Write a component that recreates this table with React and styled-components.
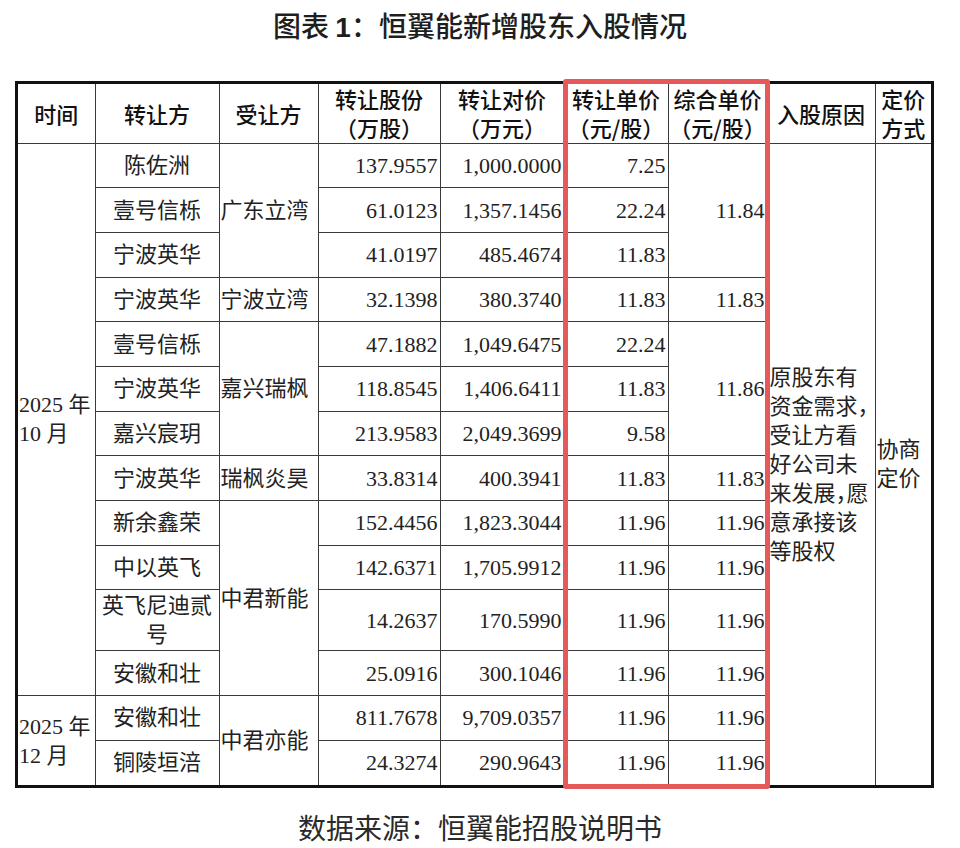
import styled, { createGlobalStyle } from "styled-components";

const GlobalStyle = createGlobalStyle`
    body {
        margin: 0;
        background: #fff;
        font-family: "Liberation Serif", "Noto Sans CJK SC", serif;
        color: #222;
    }
`;

const COLS = [77, 124, 99, 122, 124, 104, 99, 108, 56];

const HEAD = [
    ["时间"],
    ["转让方"],
    ["受让方"],
    ["转让股份", "（万股）"],
    ["转让对价", "（万元）"],
    ["转让单价", "（元/股）"],
    ["综合单价", "（元/股）"],
    ["入股原因"],
    ["定价", "方式"],
];

const ROWS = [
    { time: { lines: ["2025 年", "10 月"], span: 12 }, seller: "陈佐洲", buyer: { text: "广东立湾", span: 3 }, shares: "137.9557", price: "1,000.0000", unit: "7.25", combo: { text: "11.84", span: 3 } },
    { seller: "壹号信栎", shares: "61.0123", price: "1,357.1456", unit: "22.24" },
    { seller: "宁波英华", shares: "41.0197", price: "485.4674", unit: "11.83" },
    { seller: "宁波英华", buyer: { text: "宁波立湾", span: 1 }, shares: "32.1398", price: "380.3740", unit: "11.83", combo: { text: "11.83", span: 1 } },
    { seller: "壹号信栎", buyer: { text: "嘉兴瑞枫", span: 3 }, shares: "47.1882", price: "1,049.6475", unit: "22.24", combo: { text: "11.86", span: 3 } },
    { seller: "宁波英华", shares: "118.8545", price: "1,406.6411", unit: "11.83" },
    { seller: "嘉兴宸玥", shares: "213.9583", price: "2,049.3699", unit: "9.58" },
    { seller: "宁波英华", buyer: { text: "瑞枫炎昊", span: 1 }, shares: "33.8314", price: "400.3941", unit: "11.83", combo: { text: "11.83", span: 1 } },
    { seller: "新余鑫荣", buyer: { text: "中君新能", span: 4 }, shares: "152.4456", price: "1,823.3044", unit: "11.96", combo: { text: "11.96", span: 1 } },
    { seller: "中以英飞", shares: "142.6371", price: "1,705.9912", unit: "11.96", combo: { text: "11.96", span: 1 } },
    { seller: "英飞尼迪贰号", tall: true, shares: "14.2637", price: "170.5990", unit: "11.96", combo: { text: "11.96", span: 1 } },
    { seller: "安徽和壮", shares: "25.0916", price: "300.1046", unit: "11.96", combo: { text: "11.96", span: 1 } },
    { time: { lines: ["2025 年", "12 月"], span: 2 }, seller: "安徽和壮", buyer: { text: "中君亦能", span: 2 }, shares: "811.7678", price: "9,709.0357", unit: "11.96", combo: { text: "11.96", span: 1 } },
    { seller: "铜陵垣涪", shares: "24.3274", price: "290.9643", unit: "11.96", combo: { text: "11.96", span: 1 } },
];

const REASON = ["原股东有", "资金需求，", "受让方看", "好公司未", "来发展，愿", "意承接该", "等股权"];

const Lines = ({ lines }) =>
    lines.map((l, i) => (
        <span key={i}>
            {i > 0 && <br />}
            {l}
        </span>
    ));

export default function App() {
    return (
        <Page>
            <GlobalStyle />
            <TitleBar>
                图表 <TitleNum>1</TitleNum>：恒翼能新增股东入股情况
            </TitleBar>
            <Frame>
                <Table>
                    <colgroup>
                        {COLS.map((w, i) => (
                            <col key={i} style={{ width: w }} />
                        ))}
                    </colgroup>
                    <thead>
                        <HeadRow>
                            {HEAD.map((h, i) => (
                                <HeadCell key={i}>
                                    <Lines lines={h} />
                                </HeadCell>
                            ))}
                        </HeadRow>
                    </thead>
                    <tbody>
                        {ROWS.map((r, i) => (
                            <Row key={i} $tall={r.tall}>
                                {r.time && (
                                    <Cell rowSpan={r.time.span} $align="left">
                                        <Lines lines={r.time.lines} />
                                    </Cell>
                                )}
                                <Cell $align="center">{r.seller}</Cell>
                                {r.buyer && (
                                    <Cell rowSpan={r.buyer.span} $align="left">
                                        {r.buyer.text}
                                    </Cell>
                                )}
                                <Cell $align="right">{r.shares}</Cell>
                                <Cell $align="right">{r.price}</Cell>
                                <Cell $align="right">{r.unit}</Cell>
                                {r.combo && (
                                    <Cell rowSpan={r.combo.span} $align="right">
                                        {r.combo.text}
                                    </Cell>
                                )}
                                {i === 0 && (
                                    <>
                                        <ReasonCell rowSpan={ROWS.length}>
                                            <Lines lines={REASON} />
                                        </ReasonCell>
                                        <Cell rowSpan={ROWS.length} $align="left">
                                            <Lines lines={["协商", "定价"]} />
                                        </Cell>
                                    </>
                                )}
                            </Row>
                        ))}
                    </tbody>
                </Table>
                <Highlight />
            </Frame>
            <Caption>数据来源：恒翼能招股说明书</Caption>
        </Page>
    );
}

const Page = styled.div`
    width: 960px;
    height: 848px;
    background: #fff;
    overflow: hidden;
`;

const TitleBar = styled.h1`
    margin: 0;
    box-sizing: border-box;
    height: 81px;
    padding-top: 6px;
    text-align: center;
    font-family: "Noto Sans CJK SC", sans-serif;
    font-size: 28px;
    line-height: 38px;
    font-weight: 500;
    color: #1e1e1e;
`;

const TitleNum = styled.span`
    font-family: "Liberation Sans", sans-serif;
    font-weight: 700;
`;

const Frame = styled.div`
    position: relative;
    box-sizing: border-box;
    width: 919px;
    margin-left: 15px;
    border: 3px solid #111;
`;

const Table = styled.table`
    width: 913px;
    table-layout: fixed;
    border-collapse: collapse;
    border-style: hidden;
    font-size: 22px;
    line-height: 29px;
`;

const HeadRow = styled.tr`
    height: 59px;
`;

const HeadCell = styled.th`
    border: 1px solid #3a3a3a;
    padding: 0;
    text-align: center;
    vertical-align: middle;
    font-family: "Noto Sans CJK SC", sans-serif;
    font-weight: 500;
    font-size: 22px;
    line-height: 29px;
    color: #111;
    white-space: nowrap;
`;

const Row = styled.tr`
    height: ${(p) => (p.$tall ? "61px" : "44.7px")};
`;

const Cell = styled.td`
    border: 1px solid #3a3a3a;
    padding: ${(p) =>
        p.$align === "right" ? "0 2px 0 0" : p.$align === "left" ? "0 0 0 1px" : "0 4px"};
    text-align: ${(p) => p.$align};
    vertical-align: middle;
    color: #222;
    white-space: ${(p) => (p.$align === "center" ? "normal" : "nowrap")};
`;

const ReasonCell = styled.td`
    border: 1px solid #3a3a3a;
    padding: 0 0 0 2px;
    text-align: left;
    vertical-align: middle;
    white-space: nowrap;
    font-feature-settings: "halt";
    color: #222;
`;

const Highlight = styled.div`
    position: absolute;
    left: 545px;
    top: -5px;
    width: 207px;
    height: 710px;
    box-sizing: border-box;
    border: 5px solid #e5595b;
    border-radius: 3px;
    pointer-events: none;
`;

const Caption = styled.div`
    margin-top: 24px;
    text-align: center;
    font-family: "Liberation Serif", "Noto Sans CJK SC", serif;
    font-size: 28px;
    line-height: 36px;
    color: #2a2a2a;
`;
